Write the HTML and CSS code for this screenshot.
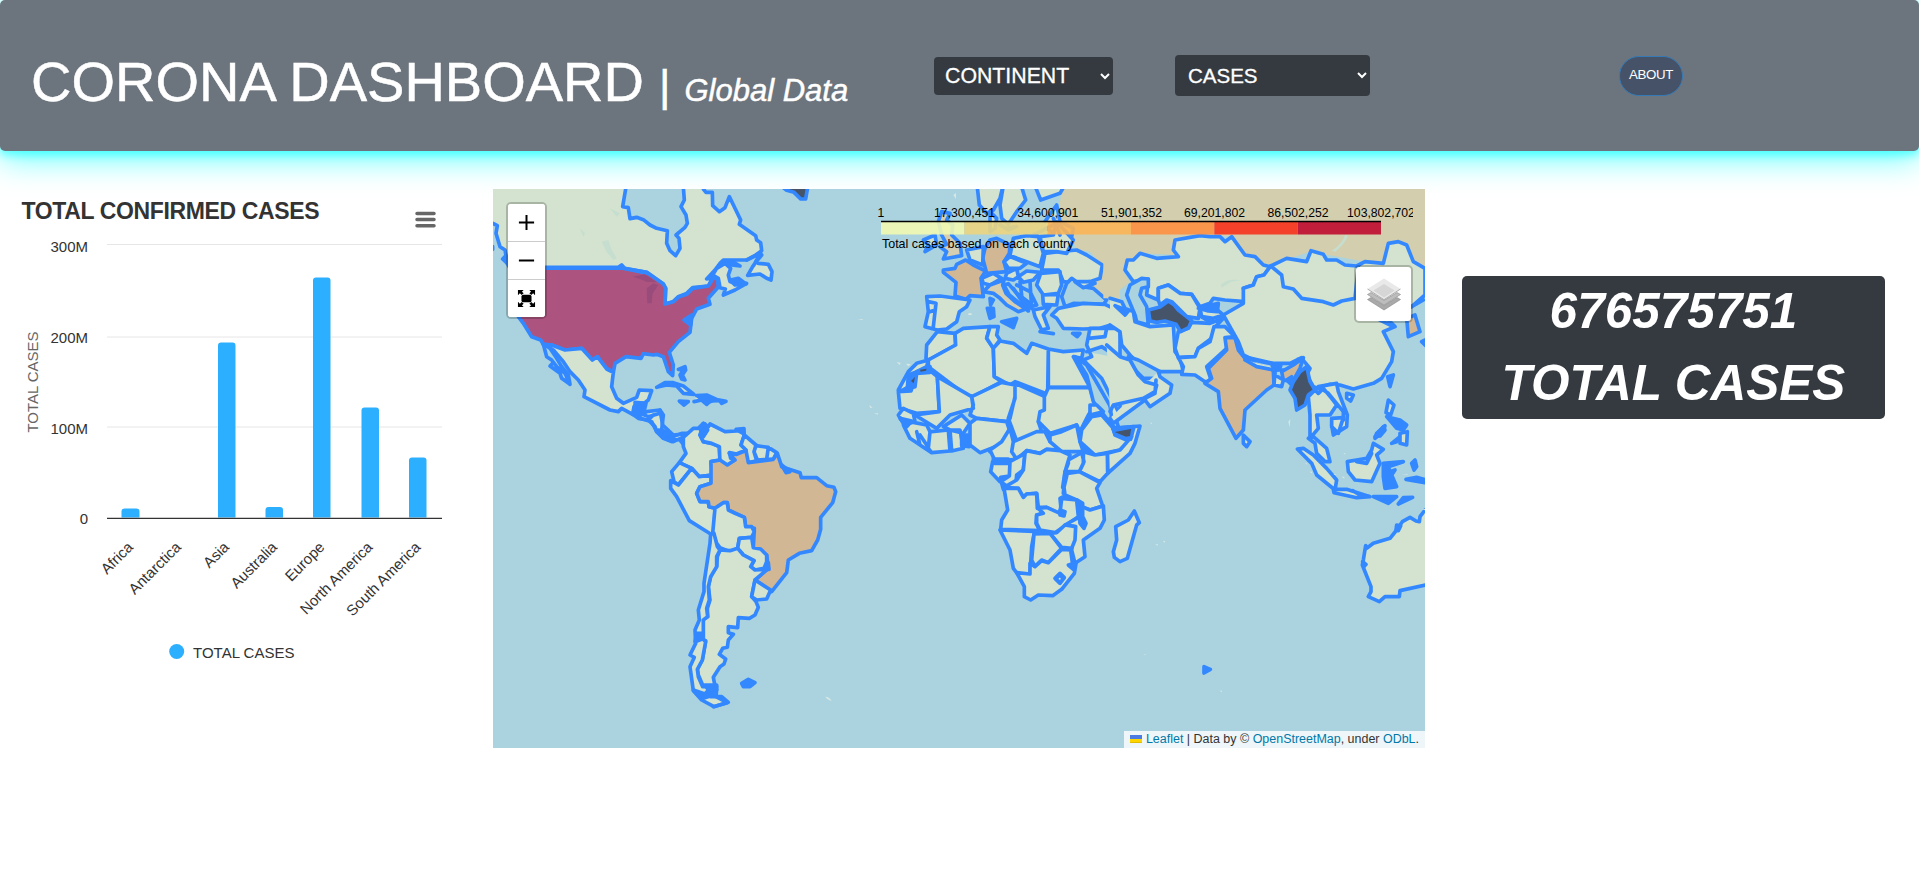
FILE: index.html
```html
<!DOCTYPE html>
<html lang="en">
<head>
<meta charset="utf-8">
<title>Corona Dashboard</title>
<link rel="stylesheet" href="styles.css">
</head>
<body>
<header class="topbar">
  <h1 class="brand">CORONA DASHBOARD<span class="brand-bar">|</span><em class="brand-sub">Global Data</em></h1>
  <select class="picker picker-region"><option>CONTINENT</option></select>
  <select class="picker picker-metric"><option>CASES</option></select>
  <button class="about">ABOUT</button>
</header>

<main class="board">
  <section class="chart">
    <svg class="chart-svg" viewBox="0 180 480 500" width="480" height="500">
      <text class="chart-title" x="21.5" y="219" textLength="298">TOTAL CONFIRMED CASES</text>
      <path class="burger" d="M417 213.500h17M417 219.500h17M417 225.800h17"/>
      <path class="grid" d="M107 244.500h335M107 337h335M107 427h335"/>
      <g class="bars">
        <path d="M121.500 517.500v-6q0-3 3-3h12q3 0 3 3v6z"/>
        <path d="M218 517.500v-172q0-3 3-3h11.500q3 0 3 3v172z"/>
        <path d="M265.500 517.500v-7.500q0-3 3-3h11.500q3 0 3 3v7.500z"/>
        <path d="M313 517.500v-237q0-3 3-3h11.500q3 0 3 3v237z"/>
        <path d="M361.500 517.500v-107q0-3 3-3h11.500q3 0 3 3v107z"/>
        <path d="M409 517.500v-57q0-3 3-3h11.500q3 0 3 3v57z"/>
      </g>
      <path class="axis" d="M107 518.300h335"/>
      <g class="ylabels">
        <text x="88" y="252">300M</text><text x="88" y="343">200M</text>
        <text x="88" y="434">100M</text><text x="88" y="524">0</text>
      </g>
      <text class="axis-title" transform="translate(38 432.500) rotate(-90)" textLength="101">TOTAL CASES</text>
      <g class="xlabels">
        <text transform="translate(134 548) rotate(-45)">Africa</text>
        <text transform="translate(182 548) rotate(-45)">Antarctica</text>
        <text transform="translate(230 548) rotate(-45)">Asia</text>
        <text transform="translate(278 548) rotate(-45)">Australia</text>
        <text transform="translate(325.500 548) rotate(-45)">Europe</text>
        <text transform="translate(373.500 548) rotate(-45)">North America</text>
        <text transform="translate(421.500 548) rotate(-45)">South America</text>
      </g>
      <circle cx="176.700" cy="651.500" r="7.500" fill="#2caffe"/>
      <text class="legend-text" x="193" y="658" textLength="101.500">TOTAL CASES</text>
    </svg>
  </section>

  <section class="map">
    <svg class="map-svg" viewBox="493 189 932 559" width="932" height="559">
      <!-- North America: local grid of a third of a pixel -->
      <g class="land" transform="translate(490 185) scale(.33333)">
        <path d="M-20-20H412L407 12 398 65 415 68 420 101 440 97 460 104 480 120 500 130 532 137 530 175 540 197 557 212 570 190 567 160 558 150 585 127 592 115 588 90 573 65 583 45 578-20H640V12L648 22H667L668 62 688 80 705 68 718 35 752 105 748 118 797 152 800 165 812 173 815 197 797 210 770 225H700L690 235 675 255 650 282 668 278 655 303 608 308 590 325 565 335 550 350 525 357 527 310 520 297 470 262 400 250H60L52 235 45 195 30 185 18 145 22 122 9 115 3 120Z"/>
        <path d="M680 250 705 235 722 250 715 270 720 290 740 298 770 295 735 315 700 330 706 312 690 308 685 280 668 270Z"/>
        <path class="solid" d="M700 228 725 228 750 243 725 240ZM722 285 745 280 768 297 735 300Z"/>
        <path d="M815 210 797 232 788 245 773 271 810 267 830 280 843 285 846 260 835 238 805 235"/>
        <path d="M770 225 812 205 797 230" fill="none"/>
        <path class="us" d="M70 247H385L395 240 404 250 470 262 520 297 527 310 525 357 550 350 567 335 590 328 608 310 655 303 672 277 682 283 685 306 655 340 660 358 620 372 605 400 600 442 565 470 538 502 550 540 548 572 535 560 520 515 500 508 490 510 460 506 453 520 408 515 375 535 370 562 350 550 322 515 307 525 275 490 225 495 185 480 160 478 152 465 125 455 100 415 85 395 70 350Z"/>
        <path class="us-gap" d="M100 252H400L470 267"/>
        <path class="solid" d="M582 405 605 390 602 420ZM565 553 585 545 587 555 577 570 585 585 575 582 570 570 580 555Z"/>
        <path d="M160 478 185 480 225 495 275 490 307 525 322 515 350 552 370 562 365 605 380 640 400 655 440 637 448 615 485 617 475 645 462 655 440 655 432 665 428 688 395 670 385 680 360 675 282 635 285 615 265 585 240 560 220 530 190 495Z"/>
        <path d="M160 478 170 515 185 525 200 545 225 565 240 598 215 580 210 565 180 543 188 535M180 490 200 520 215 545 235 570 240 598" fill="none"/>
        <path d="M428 688 450 692 470 680 510 675 520 690 515 735 530 745 550 755 575 745 610 745 582 780 570 765 555 760 545 770 520 760 500 740 495 725 475 705 445 700Z"/>
        <path class="solid" d="M435 652 468 655 462 680 440 690ZM505 735 530 740 548 755 545 768 520 757Z"/>
        <path d="M450 685 475 695 510 685M475 705 490 690" fill="none"/>
        <path d="M500 607 525 593 550 593 580 603 612 628 580 625 560 603 530 600ZM620 632 650 630 688 647 660 648 650 658 635 645 612 650"/>
        <path class="solid" d="M568 648 595 650 582 660ZM688 645 708 649 695 655ZM625 635 650 635 670 645 650 655Z"/>
        <path class="solid" d="M38 222 52 235 48 212ZM8 185v8"/>
        <path class="nodata" d="M870 0 890 16 912 22 932 42 947 42 956-10Z"/>
        <path class="lake us-lake" d="M428 275 465 268 500 292 470 290 450 282ZM470 310 490 295 505 300 488 325 485 355 472 355Z"/>
        <path class="pond" d="M335 170 355 165 365 195 380 220 370 225 350 200ZM270 130 285 145 280 155ZM360 70 390 85 380 95Z"/>
      </g>

      <!-- South America -->
      <g class="land" transform="translate(640 400) scale(.33333)">
        <path d="M60 30 68 75 100 105 130 102 128 112 100 125 75 115 50 95 35 65 0 55" fill="none"/>
        <path d="M130 112 160 85 175 85 190 70 180 105 190 125 215 130 238 140 240 180 213 185 218 225 178 230 155 205 118 188 138 160 130 140Z"/>
        <path d="M190 70 205 80 210 72 255 95 290 93 310 88 313 105 303 135 318 150 290 162 268 158 272 175 285 180 265 195 240 190 238 140 215 130 190 125 180 105 195 100Z"/>
        <path class="solid" d="M180 85 195 72 203 90 190 110ZM288 88 312 86 312 102Z"/>
        <path d="M313 105 348 135 342 155 350 182 325 188 315 165 318 150 303 135ZM348 137 385 142 380 178 352 180 342 155ZM385 142 410 158 400 178H380Z"/>
        <path d="M118 188 155 205 115 255 102 245 95 215Z"/>
        <path d="M155 205 178 230 215 225 213 250 180 260 170 280 180 305 205 305 207 320 225 325 222 400 212 402 148 362 110 290 92 265V242L115 255Z"/>
        <path class="tan" d="M213 185 240 180 262 195 285 180 268 160 290 163 318 152 325 188 400 178 412 160 422 190 425 200 480 218 484 233 530 233 560 257 582 262 587 275 578 308 542 352V388L533 420 515 452 478 460 445 480 440 518 395 575 345 540 385 505 380 465 340 443 343 385 317 380 313 352 265 330 262 308 250 308 225 325 207 320 205 305 180 305 170 280 180 260 213 250Z"/>
        <path class="solid" d="M425 195 450 215 438 218ZM370 490 385 488 387 508 368 508Z"/>
        <path d="M225 325 250 308H262L265 330 285 340 313 352 317 380 335 380 343 395 335 412 298 415 293 445 270 455 240 443 230 430 218 400Z"/>
        <path d="M298 415 335 412 340 443 362 447 380 465V485L372 505 345 510 332 500 342 482 310 465 293 445Z"/>
        <path d="M240 450 270 452 293 445 310 465 342 482 332 500 345 510 370 508 385 505 345 540 335 590 348 605 355 622 345 645 328 655 295 653 293 683 265 680 265 698 280 703 265 720 262 742 248 745 238 763 257 777 252 792 240 800 220 832 225 858 190 860 175 825 172 808 187 780 197 722 187 718V660L203 650 202 625 210 600 205 560 212 530 230 500 232 470Z"/>
        <path d="M345 540 392 570 380 597 350 600 335 590Z"/>
        <path d="M212 402 222 400 232 440 240 450 230 470V500L212 530 205 560 208 600 200 625 203 650 190 660V718L197 725 187 780 172 808 175 830 188 860 230 860 212 890 245 890 265 907 222 920 185 900 160 872 150 800 163 772 150 765 167 730 165 690 178 660 175 630 192 575V550L210 430Z"/>
        <path class="solid" d="M170 700H185V718L165 725ZM160 870 195 882 210 865 220 885 190 895ZM195 855H230V870L205 870ZM305 850 325 838 345 848 330 860 310 860Z"/>
        <path d="M215 870 230 868 228 890 262 908 220 920" fill="none"/>
        <path d="M555 890q15 0 20 14l-12-6z" class="speck"/>
      </g>

      <!-- Europe and northern Africa -->
      <g class="land" transform="translate(800 185) scale(.33333)">
        <path class="plain russia" d="M790-10H960V345L940 335 915 335 880 310 905 240 870 200 830 195 820 170 780 140 765 110 780 50Z"/>
        <path d="M530-10 538 60 560 85 580 75 600 40 612-10ZM612-10 600 60 605 100 625 118 650 80 677 45 660-10ZM700-10 722 45 780 25 800-10"/>
        <path d="M570 80 590 100 585 130 570 140ZM600 120 620 130 650 125 625 135ZM735 110 770 60 780 110 820 130 815 155 770 150 740 130"/>
        <path class="uk" d="M425 80 450 85 440 105 458 120 455 150 480 175 485 212 430 222 440 200 420 185 440 178 425 150 415 110Z"/>
        <path d="M370 165 405 150 410 180 375 200 385 180Z"/>
        <path d="M640 160 680 152 715 155 730 205 720 245 680 230 630 212ZM735 205 775 200 830 195 860 210 907 240 900 280 870 290 830 295 790 290 775 255 725 255Z"/>
        <path d="M720 155 760 150 770 110 820 165 800 205 770 200 730 200ZM760 100 780 150M700 150 760 120"/>
        <path class="tan" d="M430 255 465 250 470 238 497 225 520 240 557 258 543 280 550 335 510 332 498 343 465 333 468 292 430 262Z"/>
        <path class="tan" d="M555 190 570 165 590 160 630 180 628 205 612 230 620 260 560 265 548 220Z"/>
        <path d="M500 195 550 185 548 240 510 225ZM612 230 630 215 680 235 660 250 625 250ZM545 280 580 265 605 280 570 300 550 295ZM655 275 680 258 720 262 700 285 670 292ZM620 265 650 250 655 275 640 285 615 280Z"/>
        <path class="italy" d="M550 320 570 300 612 285 608 300 618 325 645 350 678 372 655 380 620 360 600 340 580 325Z"/>
        <path class="lake" d="M612 300 625 296 650 325 690 355 685 378 655 352 628 330Z"/>
        <path class="solid" d="M605 410 650 400 640 428ZM562 370 580 370 582 395 570 400ZM570 340 580 345 572 360ZM720 440 760 446M818 445 840 445 832 455Z"/>
        <path d="M650 300 690 320 710 360 680 370 640 310M660 290 665 330M690 290 695 370 660 330" fill="none"/>
        <path d="M722 265 780 260 785 300 775 325 730 330 710 300ZM728 330 775 328 770 360 730 358ZM700 375 750 365 730 390 745 430 725 435 705 395Z"/>
        <path class="lake" d="M785 335 800 295 815 280 850 305 880 310 920 345 910 358 820 355 795 365Z"/>
        <path d="M825 290 870 290 885 295 850 308Z"/>
        <path d="M775 370 800 365 850 355 915 358 940 370 950 415 900 430 850 432 790 430 770 400 755 390Z"/>
        <path d="M380 335 420 333 510 345 500 365 478 380 470 410 440 432 412 435 375 425 385 380ZM385 350 408 355 400 425M390 380 405 375"/>
        <path d="M412 440 465 445 467 480 385 525 378 520 380 480Z"/>
        <path d="M465 445 490 430 570 425 560 460 580 490 583 575 605 590 510 640 385 545 385 525 467 480Z"/>
        <path d="M570 425 595 425 590 450 600 465 580 490 560 460ZM600 468 640 475 680 505 695 475 745 492 743 628 645 590 630 600 583 575 580 490ZM745 492 790 500 850 495 845 520 820 515 870 607H745Z"/>
        <path d="M385 525 380 545 350 560 335 600 300 620 295 615 325 560 350 535Z"/>
        <path d="M295 620 333 618 350 562 388 555 412 575 418 680 350 685 300 670Z"/>
        <path class="solid" d="M325 570 390 545 390 562 350 565 345 605 322 612Z"/>
        <path class="nodata plain" d="M360 554 380 551 378 557 362 560ZM333 588 345 576 341 595Z"/>
        <path d="M412 575 515 635 520 670 450 690 410 730 345 690 418 680ZM515 635 605 592 645 600 645 635 630 700 620 710 530 700 510 690 520 660ZM645 595 735 635 735 680 715 710 725 740 650 768 625 700 645 640Z"/>
        <path d="M745 608H870L885 660 865 690 840 740 750 745 715 710 720 680 733 675V635Z"/>
        <path class="lake" d="M825 515 860 540 940 680 960 740 935 720 880 650 860 570Z"/>
        <path d="M870 660 890 660 910 680 870 690ZM960 430 870 430 860 480 875 515 850 525 905 580 960 690ZM865 460 915 455 920 430M860 500 905 485 960 520M930 660 960 655V700H935Z"/>
        <path d="M295 690 310 670 340 685 345 710 310 715ZM340 712 380 720 390 740 385 790 395 803 330 760 310 720ZM395 740 445 735 450 798 395 803 360 780 350 740M360 750 380 780"/>
        <path d="M430 725 485 690 510 715 490 745 450 735ZM450 735 480 735 490 790 455 798Z"/>
        <path class="solid" d="M300 700 335 708 320 725ZM485 750 510 750 508 785 485 782Z"/>
        <path d="M510 715 530 700 620 710 630 740 600 780 540 803 510 780ZM630 740 650 768 640 820 570 800 610 780Z"/>
        <path d="M735 750 830 720 840 740 845 790 780 795ZM845 740 870 700 900 690 950 740 960 800 890 805 850 790Z"/>
        <path class="speck" d="M460 30l8-6v18zM505 385h10v5h-10zM290 530l12 4-4 6zM318 536l15 2-8 6zM172 402h16v3zM208 660l10 8h-8zM222 685h12v4z"/>
      </g>

      <!-- Central and southern Africa -->
      <g class="land" transform="translate(880 400) scale(.33333)">
        <path d="M330 150 365 125 390 85 400 125 395 155 410 178 380 180 345 182ZM400 125 470 95 495 95 510 125 540 150 500 148 480 160 440 152 410 178 395 155Z"/>
        <path d="M510 105 545 95 590 75 600 125 610 155 545 155 510 125Z"/>
        <path d="M605 90 635 50 665 45 700 85 705 105 750 125 720 150 645 165 600 125Z"/>
        <path d="M700 85 780 78 765 130 750 160 683 220 682 160 720 150 755 110 705 100Z"/>
        <path class="solid" d="M698 85 762 80 752 118 705 102Z"/>
        <path class="nodata plain" d="M704 96 753 87 750 108 738 110Z"/>
        <path d="M610 155 645 165 682 160 683 220 660 245 598 215 610 190ZM565 180 605 158 612 185 598 215 555 215 565 190Z"/>
        <path d="M338 185 390 185 388 228 362 232 360 245 332 215ZM390 185 435 160 430 210 410 225 408 245 385 262 362 245 388 228Z"/>
        <path d="M440 152 480 160 500 148 540 152 570 165 555 215 550 280 560 285 540 295 545 345 500 322 475 322 470 280 440 282 430 292 415 265 372 262 410 240 430 210 435 160Z"/>
        <path class="solid" d="M340 177H385V190H345ZM555 215 568 220 562 255 548 262ZM365 250 385 262 370 268Z"/>
        <path d="M372 265 415 265 430 292 440 282 470 280 472 325 495 325 490 340 470 345 468 370 480 392 362 388 365 360 383 330 378 300Z"/>
        <path d="M562 220 598 215 660 248 650 265 668 318 630 330 605 320 590 300 555 285 552 262Z"/>
        <path d="M475 325 500 322 540 340 545 295 590 300 595 350 525 398 480 390 470 370 470 345 490 340Z"/>
        <path d="M605 320 630 330 670 318 673 360 660 385 610 420 615 470 585 490 575 450 585 380 555 375 600 350Z"/>
        <path class="solid" d="M540 330 555 335 552 348 540 345ZM592 300 608 310V350L618 370 612 385 600 370Z"/>
        <path d="M510 400 530 398 555 375 587 380 585 420 575 445 545 442ZM360 390 480 395 510 400 462 402 455 440 450 522 415 525 400 505 390 450Z"/>
        <path d="M462 402 510 400 545 445 505 488 485 480 465 500 455 480Z"/>
        <path d="M410 518 450 522V490L465 500 485 482 505 488 545 448 572 450 578 495 588 490 583 520 545 568 518 587 475 585 452 600 433 590V560Z"/>
        <path class="solid" d="M525 535 540 520 553 533 540 550ZM565 495 585 490 580 508Z"/>
        <circle class="plain" cx="539" cy="536" r="3"/>
        <path d="M763 333 778 368 770 375 742 475 720 485 703 472 700 455 710 420 707 380 745 360Z"/>
        <path class="speck" d="M808 68h8v4zM825 433h9v4zM850 422l6 2-4 5zM700 327l4 4zM790 763h7v3z"/>
      </g>

      <!-- Asia -->
      <g class="land" transform="translate(1110 185) scale(.33333)">
        <path class="plain russia" d="M-20-10H960V290L905 240 880 180 860 170 835 175 820 230 765 230 600 200 480 240 400 210 365 155 280 148 200 165 200 210 90 205 50 230 40 260 60 290 0 340H-20Z"/>
        <path d="M300 155 270 152 195 165 190 195 205 215 140 220 90 205 70 225 52 225 45 255 70 290 115 282 110 330 145 345V310L175 300 210 325 245 328 270 365 300 355 310 340 345 345 405 350 410 340 400 310 430 300 440 275 462 270 480 245 460 240 435 215 405 210 365 155 345 170 330 155Z"/>
        <path d="M482 243 530 220 590 230 603 197 640 208 650 225 680 225 705 240 740 243 765 230 820 235 835 175 865 170 890 180 910 230 945 250 945 330 905 365 830 400 855 425 820 440 850 500 845 530 815 580 790 595 730 612 690 600 660 598 625 610 610 605 590 570 600 550 575 520 500 540 430 525 400 510 385 470 340 390 400 355 400 310 430 300 440 275 462 270Z"/>
        <path d="M482 243 515 270 520 305 550 312 575 340 640 350 670 360 695 348 735 340 745 243" fill="none"/>
        <path class="lake" d="M60 300 95 280 115 282 115 305 95 310 90 330 110 365 115 420 80 410 75 390 50 330Z"/>
        <path d="M0 340 35 350 45 370 70 380 75 410 120 425 190 420 195 500 210 520 220 560 150 560 90 540 60 510 35 480 30 440 0 420"/>
        <path class="lake" d="M55 515 85 525 150 560 140 580 100 580 70 550Z"/>
        <path d="M145 345V310L175 300 210 325 245 328 270 370 265 400 230 395 185 350 170 345 150 360ZM270 370 310 365 340 390 310 400 275 395Z"/>
        <path class="solid" d="M265 370 325 355 322 380 295 378ZM15 362 55 378 45 390ZM275 395 305 405 300 412Z"/>
        <path d="M205 440 235 430 245 412 300 415 340 400 312 430 305 460 265 490 255 515 205 518 195 490Z"/>
        <path class="nodata" d="M115 375 150 366 175 348 193 360 205 375 245 407 236 428 212 440 198 418 165 408 140 412 120 408Z"/>
        <path d="M205 518 255 515 265 490 300 470 312 425 345 425 375 455 350 458 350 490 290 545 305 590 285 590 255 570 215 568 220 545Z"/>
        <path class="tan" d="M345 458 375 458 385 495 405 520 440 540 490 555 492 600 470 615 405 675 400 735 378 760 330 670 325 620 285 595 305 580 295 550 350 495ZM515 560 550 540 580 518 570 550 548 590 520 585Z"/>
        <path d="M403 515 490 535 540 535 575 518M405 525 440 545 490 555 520 555M495 560 492 600 515 605 520 585 495 570Z"/>
        <path class="solid" d="M487 543 512 543 508 552 495 557ZM530 585 545 575 545 600Z"/>
        <path class="nodata" d="M590 545 600 590 615 615 595 630 585 660 560 675 555 640 540 615 550 590 570 560Z"/>
        <path d="M595 635 615 615 625 625 640 610 665 640 680 660 660 690 620 690 625 730 600 760 600 690ZM625 605 680 595 685 620 712 690 710 725 670 750 665 720 700 705 700 680 655 625Z"/>
        <path d="M665 700 700 698 685 745 665 725ZM400 750 420 770 410 785 400 775Z"/>
        <path d="M710 625 730 630 722 648 710 640Z"/>
        <path class="solid" d="M833 575 850 570 840 605ZM800 745 825 722 820 740 795 760Z"/>
        <path class="tan" d="M890 400 915 390 930 440 895 455ZM935 470 955 460V490Z"/>
        <path d="M905 365 940 345M780 390 850 425"/>
        <path d="M-10 480 30 515 60 525 85 570 105 590 140 600 135 620 100 640 10 660 0 680M145 560 150 575 185 600 180 625 120 665 105 645 10 715 0 700M105 640 135 625 138 585"/>
        <path class="pond" d="M333 300q15-20 60-15l-30 5-28 18z"/>
        <path class="pond" d="M665 198q35-25 40-48l9 2q-10 25-38 48z"/>
      </g>

      <!-- South-East Asia and Australia -->
      <g class="land" transform="translate(1170 400) scale(.33333)">
        <path d="M382 147 400 145 430 165 470 205 500 240 495 270 440 225 425 190ZM490 268 530 268 600 290 560 293 492 278ZM548 272 570 285"/>
        <path d="M415 115 430 110 470 145 480 185 465 185 440 160 435 130Z"/>
        <path d="M532 185 560 180 590 175 605 150 610 130 640 148 620 165 630 190 605 245 555 240 535 215ZM560 185 590 190 605 160"/>
        <path class="solid" d="M640 190 700 185 655 200 660 215 675 210 665 225 680 260 645 265 640 230ZM610 290 680 290 655 310ZM685 312 700 293 728 292ZM725 190 735 180 740 200 732 210ZM708 238 740 232 768 240 765 248ZM615 110 640 80 645 90 630 108ZM665 130 690 110 680 125Z"/>
        <path class="solid" d="M650 50 690 60 710 75 700 90 680 85Z"/>
        <path d="M655 0 672 15 662 45 648 38ZM690 100 712 95 710 135 690 130Z"/>
        <path d="M800 310 765 330 750 350 748 365 738 363 720 352 697 365 680 390 660 415 610 430 590 445 587 437 580 480 577 495 603 560 603 575 595 590 628 605 645 590H688L690 572 800 548Z"/>
        <path class="solid" d="M680 375 692 378 685 392 678 390ZM578 485 588 493 582 500ZM102 800 121 808 102 819Z"/>
        <path class="speck" d="M355 65l6-8-2 25zM405 190h5l2 4zM418 215h8v5zM515 230h8v6zM490 222h7v4zM520 160h6v4zM695 222h18v2zM148 872h8v5zM755 327h10v4z"/>
      </g>
    </svg>

    <svg class="scale" viewBox="873 189 539.700 62" width="539.700" height="62">
      <g class="swatches">
        <path fill="#f1f9b2" d="M881 222h83.300v12.500H881z"/><path fill="#edd680" d="M964.300 222h83.400v12.500h-83.400z"/>
        <path fill="#fcb556" d="M1047.700 222h83.300v12.500h-83.300z"/><path fill="#fe9041" d="M1131 222h83.300v12.500H1131z"/>
        <path fill="#f7331b" d="M1214.300 222h83.400v12.500h-83.400z"/><path fill="#bf0c2e" d="M1297.700 222h83.300v12.500h-83.300z"/>
      </g>
      <path d="M881 221.500h500" stroke="#000" stroke-width="1.300"/>
      <g class="ticks">
        <text x="881" y="217">1</text><text x="964.500" y="217">17,300,451</text><text x="1047.800" y="217">34,600,901</text>
        <text x="1131.500" y="217">51,901,352</text><text x="1214.500" y="217">69,201,802</text><text x="1298" y="217">86,502,252</text>
        <text x="1381" y="217">103,802,702</text>
      </g>
      <text class="scale-caption" x="882" y="248" textLength="191.500">Total cases based on each country</text>
    </svg>

    <div class="zoomer">
      <button><svg viewBox="0 0 20 20"><path d="M2 10H18M10 2V18"/></svg></button>
      <button><svg viewBox="0 0 20 20"><path d="M2 10H18"/></svg></button>
      <button><svg viewBox="0 0 20 20"><rect x="4.700" y="6" width="10.600" height="8" rx="2" fill="#000" stroke="none"/><path fill="#000" stroke="none" d="M1 1H7L5.200 2.800 7 4.600 5 6.400 3 4.600 1 6.500ZM19 1H13L14.800 2.800 13 4.600 15 6.400 17 4.600 19 6.500ZM1 19H7L5.200 17.200 7 15.400 5 13.600 3 15.400 1 13.500ZM19 19H13L14.800 17.200 13 15.400 15 13.600 17 15.400 19 13.500Z"/></svg></button>
    </div>
    <button class="layers">
      <svg viewBox="0 0 36 36" width="36" height="36">
        <path fill="#a9a9a9" stroke="#888" stroke-width=".6" d="M1.500 23.500 18 34 34.500 23.500 31 21.500 18 29.500 5 21.500Z"/>
        <path fill="#bdbdbd" stroke="#8a8a8a" stroke-width=".6" d="M1.500 18.500 18 29 34.500 18.500 31 16.500 18 24.500 5 16.500Z"/>
        <path fill="#e9e9e9" d="M18 2.500 34.500 13 18 23.500 1.500 13Z"/><path fill="#d6d6d6" d="M18 8 28.500 14.500 18 21.500 7.500 14.500Z"/>
        <path fill="none" stroke="#999" stroke-width=".8" d="M1.500 13 18 23.700 34.500 13"/>
      </svg>
    </button>
    <div class="credit">
      <svg viewBox="0 0 12 8" width="12" height="8"><path fill="#4C7BE1" d="M0 0h12v4H0z"/><path fill="#FFD500" d="M0 4h12v3H0z"/><path fill="#E0BC00" d="M0 7h12v1H0z"/></svg>
      <a>Leaflet</a> | Data by © <a>OpenStreetMap</a>, under <a>ODbL</a>.
    </div>
  </section>

  <section class="total"><div>676575751</div><div>TOTAL CASES</div></section>
</main>
</body>
</html>
```

FILE: styles.css
```css
* { box-sizing: border-box; }
body { margin: 0; background: #fff; font-family: "Liberation Sans", Arial, sans-serif; overflow: hidden; }
svg { display: block; }
button { font-family: inherit; }

.topbar {
  display: flex;
  align-items: center;
  height: 151px;
  padding-left: 31px;
  background: #6c757d;
  border-radius: 5px;
  box-shadow: 0 4px 8px rgba(0,255,255,.5), 0 8px 32px rgba(0,255,255,.6);
}
.brand { width: 903px; margin: 21px 0 0; color: #fff; font-size: 56px; font-weight: 400; line-height: 68px; white-space: nowrap; -webkit-text-stroke: .5px #fff; }
.brand-bar { margin-left: 15px; font-size: 44px; }
.brand-sub { margin-left: 14px; font-size: 31px; }

.picker { color: #fff; background: #343a40; border: 0; border-radius: 4px; font-family: inherit; -webkit-text-stroke: .3px #fff; }
.picker-region { width: 179px; height: 38px; margin-right: 62px; padding: 0 0 0 7px; font-size: 21.300px; }
.picker-metric { width: 195px; height: 41px; padding: 0 3px 0 9px; font-size: 20.500px; }
.about {
  width: 64px; height: 40px; margin-left: 249px; padding: 0 0 3px;
  color: #fff; font-size: 13.300px; letter-spacing: -.4px;
  background: #465268; border: 1px solid #337ab7; border-radius: 20px;
}

.board { display: flex; align-items: flex-start; padding-top: 38px; }
.chart { width: 493px; height: 490px; margin-top: -9px; }
.chart-svg text { fill: #333; }
.chart-svg .chart-title { font-size: 23px; font-weight: 700; }
.burger { stroke: #666; stroke-width: 3.500; stroke-linecap: round; }
.grid { stroke: #e6e6e6; }
.axis { stroke: #333; stroke-width: 1.200; }
.bars { fill: #2caffe; }
.ylabels { font-size: 15px; text-anchor: end; }
.xlabels { font-size: 15px; text-anchor: end; }
.chart-svg .axis-title { font-size: 15px; fill: #666; }
.legend-text { font-size: 15px; }

.map { position: relative; width: 932px; height: 559px; overflow: hidden; background: #aad3df; }
.land { fill: #d3e3cf; stroke: #3388ff; stroke-width: 11; stroke-linejoin: round; stroke-linecap: round; }
.land .solid { fill: #3388ff; }
.land .plain { stroke: none; }
.land .russia { fill: #d3cead; }
.land .us { fill: #ac547f; }
.land .us-gap { fill: none; stroke-width: 6; }
.land .tan { fill: #d2b795; }
.land .uk, .land .italy { fill: #d6ceb1; }
.land .nodata { fill: #455469; }
.land .lake { fill: #aad3df; }
.land .pond { fill: #c6decf; stroke: none; }
.land .us-lake, .land .us-lake.lake { fill: #994b7b; stroke: none; }
.land .speck { fill: #d7e7e4; stroke: none; }

.scale { position: absolute; left: 380px; top: 0; }
.swatches { opacity: .9; }
.ticks { font-size: 12.200px; text-anchor: middle; }
.ticks text { transform: scaleY(1.08); transform-origin: 0 217px; }
.scale-caption { font-size: 12.500px; }

.zoomer { position: absolute; left: 13px; top: 13px; width: 41px; border: 2px solid rgba(0,0,0,.2); border-radius: 5px; background: #fff; background-clip: padding-box; overflow: hidden; }
.zoomer button { display: grid; place-items: center; width: 100%; height: 38px; padding: 0; background: #fff; border: 0; border-bottom: 1px solid #ccc; }
.zoomer button:last-child { border: 0; height: 37px; }
.zoomer svg { width: 19px; height: 19px; stroke: #000; stroke-width: 2.100; fill: none; }
.layers { position: absolute; left: 861px; top: 76px; display: grid; place-items: center; width: 59px; height: 58px; padding: 0; background: #fff; background-clip: padding-box; border: 2px solid rgba(0,0,0,.2); border-radius: 5px; }
.credit { position: absolute; right: 0; bottom: 0; display: block; height: 17px; padding: 0 6px; background: rgba(255,255,255,.8); color: #333; font-size: 12.480px; line-height: 16px; white-space: nowrap; }
.credit svg { display: inline-block; }
.credit a { color: #0078a8; }

.total { width: 423px; height: 143px; margin: 87px 0 0 37px; color: #fff; background: #343a40; border-radius: 5px; font-size: 49.500px; font-style: italic; font-weight: 700; line-height: 72px; text-align: center; }
.total div { height: 72px; margin-top: -1px; }
.total div + div { margin-top: 0; }
```
